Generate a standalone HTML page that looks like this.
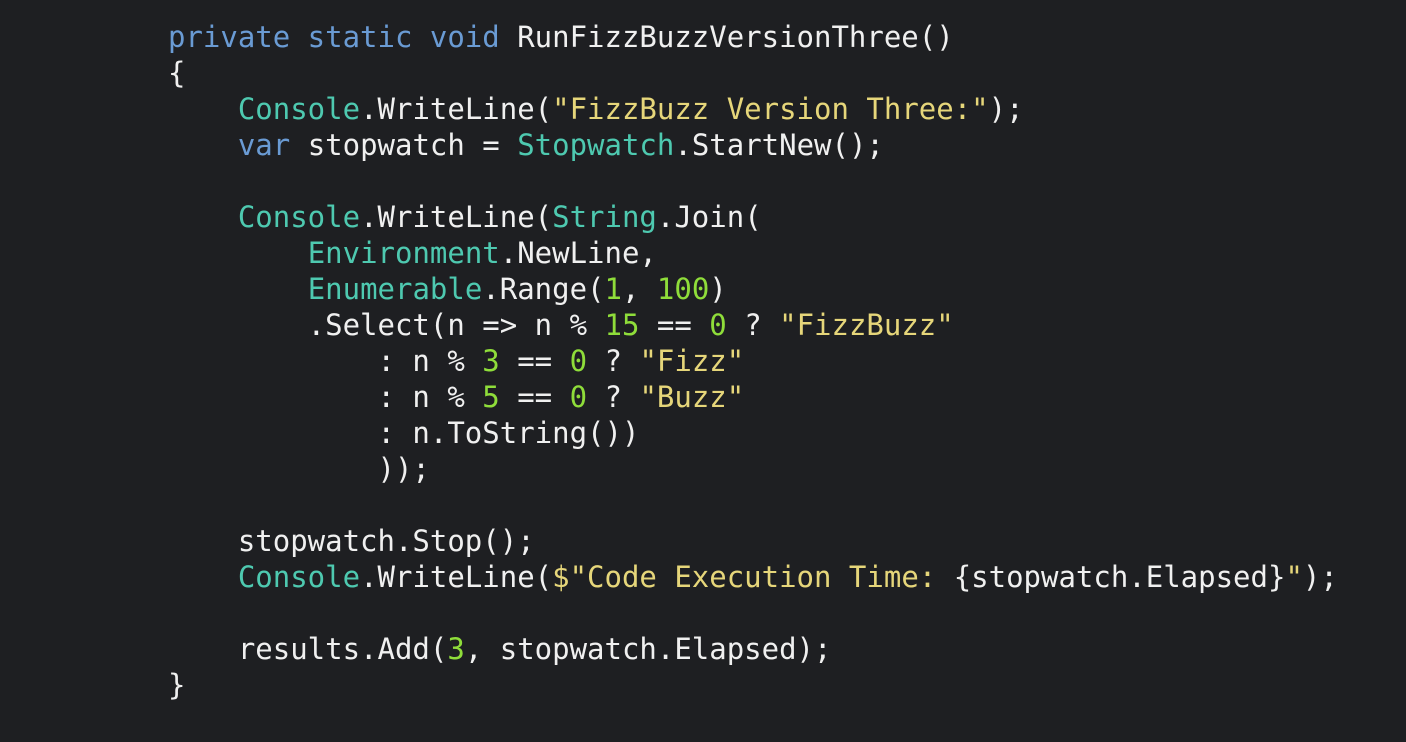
<!DOCTYPE html>
<html><head><meta charset="utf-8"><style>
html,body{margin:0;padding:0;background:#1e1f22;width:1406px;height:742px;overflow:hidden}
pre{position:absolute;left:168px;top:19px;margin:0;font-family:"DejaVu Sans Mono","Liberation Mono",monospace;font-size:29px;line-height:36px;color:#f0f0f0;letter-spacing:0.0px}
.k{color:#6a9bd4}.t{color:#4ec9b0}.s{color:#e6d67a}.n{color:#8fdd3a}
</style></head><body>
<pre><span class="k">private static void</span> RunFizzBuzzVersionThree()
{
    <span class="t">Console</span>.WriteLine(<span class="s">"FizzBuzz Version Three:"</span>);
    <span class="k">var</span> stopwatch = <span class="t">Stopwatch</span>.StartNew();

    <span class="t">Console</span>.WriteLine(<span class="t">String</span>.Join(
        <span class="t">Environment</span>.NewLine,
        <span class="t">Enumerable</span>.Range(<span class="n">1</span>, <span class="n">100</span>)
        .Select(n =&gt; n % <span class="n">15</span> == <span class="n">0</span> ? <span class="s">"FizzBuzz"</span>
            : n % <span class="n">3</span> == <span class="n">0</span> ? <span class="s">"Fizz"</span>
            : n % <span class="n">5</span> == <span class="n">0</span> ? <span class="s">"Buzz"</span>
            : n.ToString())
            ));

    stopwatch.Stop();
    <span class="t">Console</span>.WriteLine(<span class="s">$"Code Execution Time: </span>{stopwatch.Elapsed}<span class="s">"</span>);

    results.Add(<span class="n">3</span>, stopwatch.Elapsed);
}</pre>
</body></html>
